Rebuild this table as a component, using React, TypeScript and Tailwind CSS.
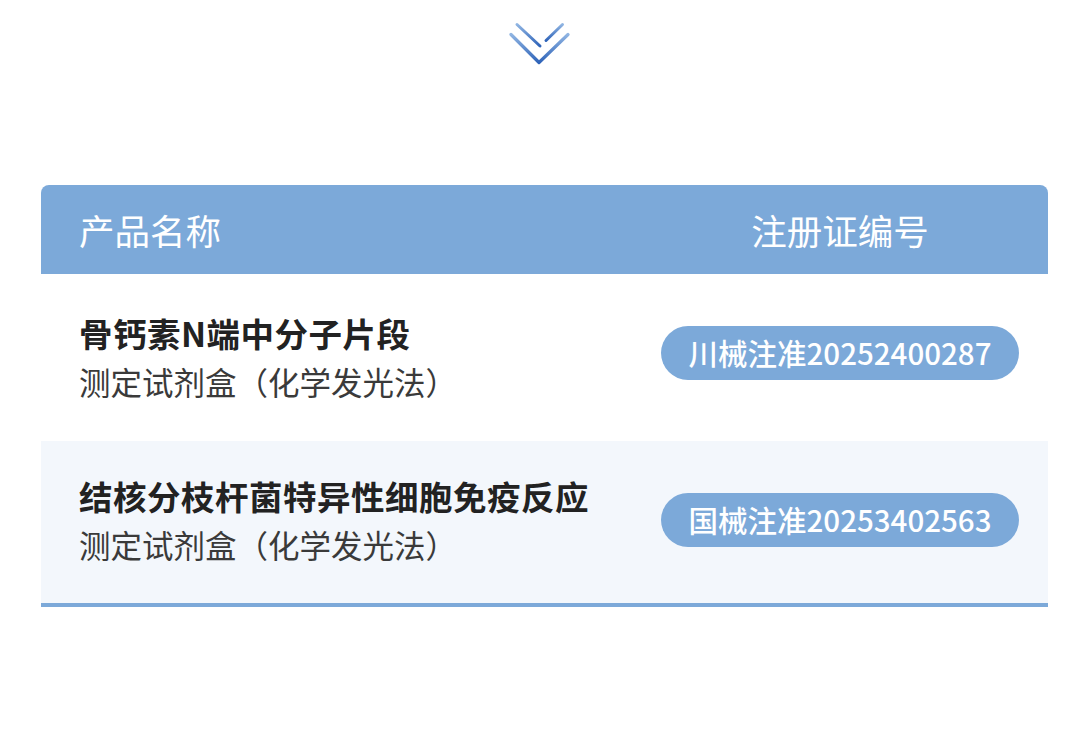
import React from 'react';

interface Product {
  name: string;
  method: string;
  reg: string;
}

const products: Product[] = [
  { name: '骨钙素N端中分子片段', method: '测定试剂盒（化学发光法）', reg: '川械注准20252400287' },
  { name: '结核分枝杆菌特异性细胞免疫反应', method: '测定试剂盒（化学发光法）', reg: '国械注准20253402563' },
];

const Chevron: React.FC = () => (
  <svg width="62" height="46" viewBox="0 0 62 46" fill="none">
    <defs>
      <linearGradient id="chev" x1="0" y1="0" x2="0" y2="1">
        <stop offset="0" stopColor="#8fb4e2" />
        <stop offset="1" stopColor="#2f64b9" />
      </linearGradient>
    </defs>
    <path d="M2 13.5 L30 41.5 L59 13.5" stroke="url(#chev)" strokeWidth="3.2" strokeLinecap="round" strokeLinejoin="round" />
    <path d="M8 3.5 L31 25" stroke="url(#chev)" strokeWidth="3" strokeLinecap="round" />
    <path d="M53.5 3.5 L37 19.5" stroke="url(#chev)" strokeWidth="3" strokeLinecap="round" />
  </svg>
);

const App: React.FC = () => {
  return (
    <div className="w-[1080px] h-[733px] bg-white overflow-hidden" style={{ fontFamily: '"Noto Sans CJK SC", "Noto Sans", sans-serif' }}>
      <div className="flex justify-center pt-[21px]">
        <Chevron />
      </div>

      <div className="ml-[41px] w-[1007px] mt-[118px]">
        <div className="h-[89px] bg-[#7ca9d9] rounded-t-[8px] flex items-center justify-between pl-[38px] pr-[29px]">
          <span className="text-[35.5px] text-white leading-none">产品名称</span>
          <span className="w-[358px] text-center text-[35.5px] text-white leading-none">注册证编号</span>
        </div>

        {products.map((p, i) => (
          <div
            key={p.reg}
            className={`flex items-center justify-between pl-[38px] pr-[29px] ${i === 0 ? 'h-[167px] bg-white' : 'h-[162px] bg-[#f3f7fc]'}`}
          >
            <div className={`flex flex-col ${i === 0 ? 'pb-[2px]' : 'pb-[4px]'}`}>
              <span className="text-[33.5px] font-bold text-[#222] leading-[48px] tracking-[0.5px]">{p.name}</span>
              <span className="text-[31.5px] text-[#3a3a3a] leading-[48px]">{p.method}</span>
            </div>
            <div className={`w-[358px] h-[54px] rounded-full bg-[#7ca9d9] flex items-center justify-center ${i === 0 ? 'mb-[10px]' : 'mb-[5px]'}`}>
              <span className="text-[29.5px] font-medium text-white leading-none">{p.reg}</span>
            </div>
          </div>
        ))}

        <div className="h-[4px] bg-[#7ca9d9]" />
      </div>
    </div>
  );
};

export default App;
